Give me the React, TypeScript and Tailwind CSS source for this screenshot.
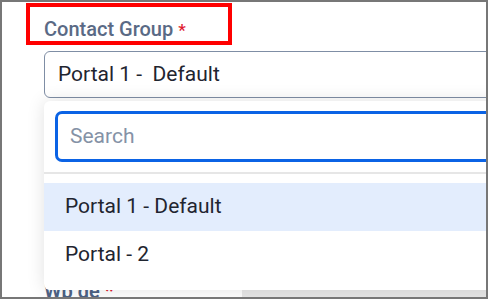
import React from 'react';

const options = ['Portal 1 - Default', 'Portal - 2'];

const DropdownPanel: React.FC<{ active: number }> = ({ active }) => (
    <div className="absolute left-[42px] top-[99px] w-[460px] h-[189px] bg-white rounded-md shadow-[0_0_18px_rgba(0,0,0,0.12)] flex flex-col">
        <div className="pt-[10px] pl-[11px] pb-[10px]">
            <div className="h-[51px] w-[460px] rounded-[7px] border-[3px] border-[#0b63e5] flex items-center pl-[12px]">
                <span className="text-[21px] text-[#8592a6]">Search</span>
            </div>
        </div>
        <div className="h-[2px] bg-[#e6e6e6]"></div>
        <div className="pt-[9px] flex flex-col">
            {options.map((opt, i) => (
                <div
                    key={opt}
                    className={`h-[48px] flex items-center pl-[21px] text-[21px] text-[#1f2530] ${i === active ? 'bg-[#e3edfd]' : ''}`}
                >
                    {opt}
                </div>
            ))}
        </div>
    </div>
);

export default function App() {
    return (
        <div className="w-[488px] h-[299px] relative overflow-hidden bg-white border-2 border-[#777777] font-['Roboto',sans-serif]">
            <div className="ml-[24px] mt-[1px] w-[206px] h-[42px] border-4 border-[#ff0000] flex items-end pl-[14px] pb-[2px]">
                <span className="text-[20px] font-medium text-[#5a6a85] leading-none">
                    Contact Group <span className="text-[#e01b2f] text-[17px]">*</span>
                </span>
            </div>
            <div className="ml-[42px] mt-[6px] w-[470px] h-[47px] border border-[#7f8ea5] rounded-[6px] flex items-center pl-[13px]">
                <span className="text-[21px] text-[#1f2530] whitespace-pre">Portal 1 -  Default</span>
            </div>
            <div className="ml-[42px] mt-[183px] text-[20px] font-semibold text-[#4e6386] leading-none">
                Wb de <span className="text-[#e01b2f]">*</span>
            </div>
            <div className="absolute left-[240px] top-[286px] right-0 bottom-0 bg-[#e8e8e8]"></div>
            <DropdownPanel active={0} />
        </div>
    );
}
